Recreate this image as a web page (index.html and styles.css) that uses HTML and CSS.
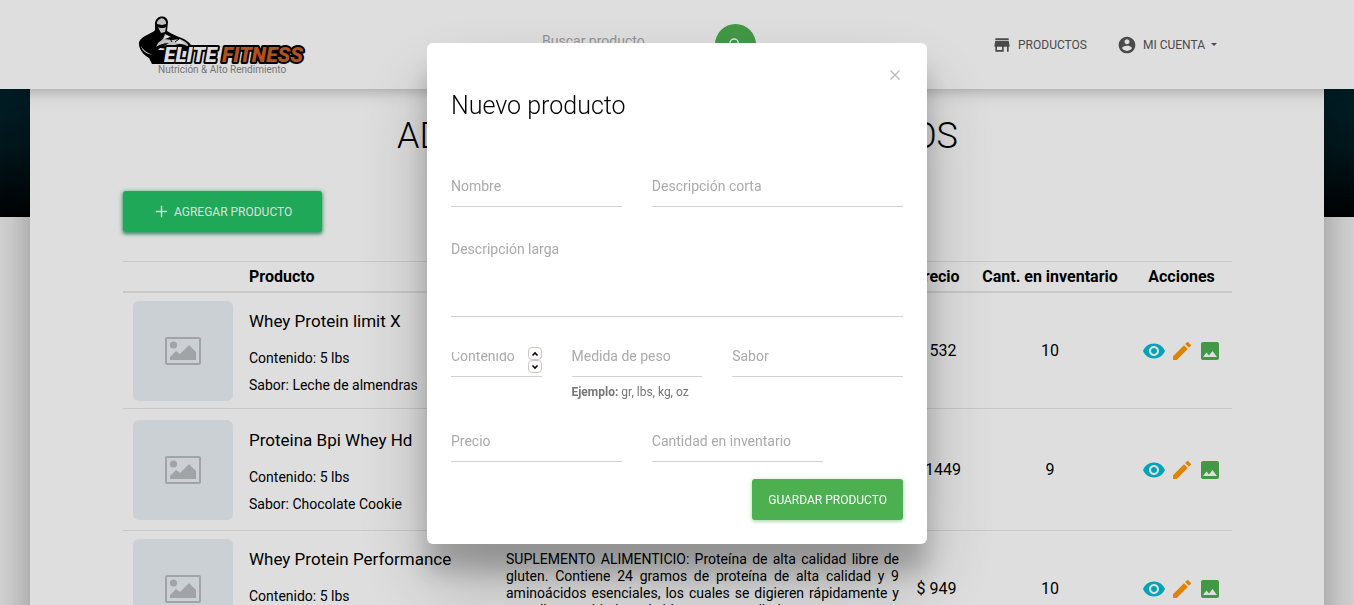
FILE: index.html
```
<!DOCTYPE html>
<html lang="es">
<head>
<meta charset="utf-8">
<title>Elite Fitness</title>
<meta name="viewport" content="width=device-width, initial-scale=1">
<link rel="stylesheet" href="styles.css">
</head>
<body>
<svg class="defs" width="0" height="0" aria-hidden="true">
  <symbol id="i-photo" viewBox="0 0 36 28"><path fill="none" stroke="currentColor" stroke-width="2" d="M2 1h32a1 1 0 0 1 1 1v24a1 1 0 0 1-1 1H2a1 1 0 0 1-1-1V2a1 1 0 0 1 1-1z"/><circle cx="8.500" cy="8" r="3.600" fill="currentColor"/><path fill="currentColor" d="M5 23v-3l6-6 4 3 9-9 7 7v8z"/></symbol>
  <symbol id="i-eye" viewBox="0 0 24 24"><path fill="currentColor" d="M12 4.500C7 4.500 2.730 7.610 1 12c1.730 4.390 6 7.500 11 7.500s9.270-3.110 11-7.500c-1.730-4.390-6-7.500-11-7.500zM12 17c-2.760 0-5-2.240-5-5s2.240-5 5-5 5 2.240 5 5-2.240 5-5 5zm0-8c-1.660 0-3 1.340-3 3s1.340 3 3 3 3-1.340 3-3-1.340-3-3-3z"/></symbol>
  <symbol id="i-edit" viewBox="0 0 24 24"><path fill="currentColor" d="M3 17.250V21h3.750L17.810 9.940l-3.750-3.750L3 17.250zM20.710 7.040a1 1 0 0 0 0-1.410l-2.340-2.340a1 1 0 0 0-1.410 0l-1.830 1.830 3.750 3.750 1.830-1.830z"/></symbol>
  <symbol id="i-image" viewBox="0 0 24 24"><path fill="currentColor" d="M21 19V5c0-1.100-.9-2-2-2H5c-1.100 0-2 .9-2 2v14c0 1.100.9 2 2 2h14c1.100 0 2-.9 2-2zM8.500 13.500l2.500 3.010L14.500 12l4.500 6H5l3.500-4.500z"/></symbol>
</svg>

<header class="navbar">
  <div class="container navbar-inner">
    <a class="brand" href="#" aria-label="Elite Fitness">
      <svg width="168" height="60" viewBox="0 0 168 60">
        <path fill="#000" d="M17 9c0-9 12-10 13-2l-1 9c5 3 8 4 12 6 6 2 11 5 13 10l-1 4H35L26 49H14l-3-6C5 40 0 33 1 27c3-7 13-8 16-12z"/>
        <path fill="#ddd" d="M19 7c3-5 7-5 9 0v2l-4 1-5-1zM20 12l2 1h4l2-1-1 5-4 1zM27 19l6 3-7 2 8 1 8-1c4 2 8 4 9 8-5-3-9-4-14-2-3 1-7 2-11 1l5-3c-5 0-8 1-13 4l2-4 5-4zM3 31c2 4 6 7 12 9l-4-1c-4-1-7-4-8-8z"/>
        <path fill="#fff" d="M28 20l4 2-6 2zM35 26l7-1 5 4-7-1zM22 33l9 1 8-1-6 2H20z"/>
        <path stroke="#000" stroke-width="1" fill="none" d="M31 22l3 5M41 24l-4 3"/>
        <g class="logo-word"><text x="26" y="47" fill="#fff">ELITE</text><text x="84" y="47" fill="#cc5f22">FITNESS</text></g>
        <text class="logo-tag" x="20" y="58">Nutrición &amp; Alto Rendimiento</text>
      </svg>
    </a>
    <form class="search">
      <input class="search-input" type="search" placeholder="Buscar producto" aria-label="Buscar producto">
      <button class="search-button" type="button" aria-label="Buscar"><svg width="18" height="18" viewBox="0 0 24 24"><path fill="#fff" d="M15.500 14h-.79l-.28-.27A6.470 6.470 0 0 0 16 9.500 6.500 6.500 0 1 0 9.500 16c1.610 0 3.090-.59 4.230-1.570l.27.28v.79l5 4.990L20.490 19l-4.990-5zm-6 0a4.500 4.500 0 1 1 0-9 4.500 4.500 0 0 1 0 9z"/></svg></button>
    </form>
    <nav class="nav">
      <a class="nav-link" href="#"><svg width="20" height="20" viewBox="0 0 24 24"><path fill="currentColor" d="M20 4H4v2h16V4zm1 10v-2l-1-5H4l-1 5v2h1v6h10v-6h4v6h2v-6h1zm-9 4H6v-4h6v4z"/></svg>PRODUCTOS</a>
      <a class="nav-link" href="#"><svg width="20" height="20" viewBox="0 0 24 24"><path fill="currentColor" d="M12 2C6.480 2 2 6.480 2 12s4.480 10 10 10 10-4.480 10-10S17.520 2 12 2zm0 3c1.660 0 3 1.340 3 3s-1.340 3-3 3-3-1.340-3-3 1.340-3 3-3zm0 14.200a7.200 7.200 0 0 1-6-3.220c.03-1.990 4-3.080 6-3.080 1.990 0 5.970 1.090 6 3.080a7.200 7.200 0 0 1-6 3.220z"/></svg>MI CUENTA<span class="caret"></span></a>
    </nav>
  </div>
</header>

<main class="main">
  <div class="container">
    <h1 class="page-title">ADMINISTRACIÓN DE PRODUCTOS</h1>
    <button class="btn btn-add" type="button"><svg width="17" height="17" viewBox="0 0 24 24"><path fill="currentColor" d="M20 13h-7v7h-2v-7H4v-2h7V4h2v7h7z"/></svg>AGREGAR PRODUCTO</button>
    <table class="products">
      <colgroup><col class="c-photo"><col class="c-name"><col class="c-desc"><col class="c-price"><col class="c-stock"><col class="c-actions"></colgroup>
      <thead>
        <tr><th></th><th class="left">Producto</th><th></th><th class="price">Precio</th><th>Cant. en inventario</th><th>Acciones</th></tr>
      </thead>
      <tbody>
        <tr>
          <td><div class="photo"><svg width="36" height="28"><use href="#i-photo"/></svg></div></td>
          <td class="left"><h2 class="name">Whey Protein limit X</h2><p class="detail">Contenido: 5 lbs</p><p class="detail">Sabor: Leche de almendras</p></td>
          <td></td><td class="price">$ 532</td><td>10</td>
          <td><div class="actions"><a class="view" href="#" aria-label="Ver"><svg width="24" height="24"><use href="#i-eye"/></svg></a><a class="edit" href="#" aria-label="Editar"><svg width="24" height="24"><use href="#i-edit"/></svg></a><a class="image" href="#" aria-label="Imagen"><svg width="24" height="24"><use href="#i-image"/></svg></a></div></td>
        </tr>
        <tr class="tall">
          <td><div class="photo"><svg width="36" height="28"><use href="#i-photo"/></svg></div></td>
          <td class="left"><h2 class="name">Proteina Bpi Whey Hd</h2><p class="detail">Contenido: 5 lbs</p><p class="detail">Sabor: Chocolate Cookie</p></td>
          <td></td><td class="price">$ 1449</td><td>9</td>
          <td><div class="actions"><a class="view" href="#" aria-label="Ver"><svg width="24" height="24"><use href="#i-eye"/></svg></a><a class="edit" href="#" aria-label="Editar"><svg width="24" height="24"><use href="#i-edit"/></svg></a><a class="image" href="#" aria-label="Imagen"><svg width="24" height="24"><use href="#i-image"/></svg></a></div></td>
        </tr>
        <tr>
          <td><div class="photo"><svg width="36" height="28"><use href="#i-photo"/></svg></div></td>
          <td class="left"><h2 class="name">Whey Protein Performance</h2><p class="detail">Contenido: 5 lbs</p><p class="detail">Sabor: Chocolate</p></td>
          <td class="desc"><p>SUPLEMENTO ALIMENTICIO: Proteína de alta calidad libre de gluten. Contiene 24 gramos de proteína de alta calidad y 9 aminoácidos esenciales, los cuales se digieren rápidamente y con ello sus objetivos de bienestar y rendimiento.</p></td>
          <td class="price">$ 949</td><td>10</td>
          <td><div class="actions"><a class="view" href="#" aria-label="Ver"><svg width="24" height="24"><use href="#i-eye"/></svg></a><a class="edit" href="#" aria-label="Editar"><svg width="24" height="24"><use href="#i-edit"/></svg></a><a class="image" href="#" aria-label="Imagen"><svg width="24" height="24"><use href="#i-image"/></svg></a></div></td>
        </tr>
      </tbody>
    </table>
  </div>
</main>

<div class="backdrop">
  <div class="modal" role="dialog" aria-modal="true" aria-labelledby="modal-title">
    <button class="close" type="button" aria-label="Cerrar"><svg width="16" height="16" viewBox="0 0 16 16"><path d="M3.500 3.500l9 9M12.500 3.500l-9 9" stroke="#bbb" stroke-width="1.300"/></svg></button>
    <h2 class="modal-title" id="modal-title">Nuevo producto</h2>
    <form class="form">
      <div class="field span-5"><label for="nombre">Nombre</label><input id="nombre" type="text"></div>
      <div class="field span-7"><label for="corta">Descripción corta</label><input id="corta" type="text"></div>
      <div class="field long span-12"><label for="larga">Descripción larga</label><textarea id="larga"></textarea></div>
      <div class="field number span-3"><label for="contenido">Contenido</label><input id="contenido" type="number">
        <div class="stepper"><button type="button" aria-label="Aumentar"><svg width="8" height="6" viewBox="0 0 8 6"><path d="M1.500 4.500L4 2l2.500 2.500"/></svg></button><button type="button" aria-label="Disminuir"><svg width="8" height="6" viewBox="0 0 8 6"><path d="M1.500 1.500L4 4l2.500-2.500"/></svg></button></div>
      </div>
      <div class="span-4"><div class="field"><label for="medida">Medida de peso</label><input id="medida" type="text"></div><p class="hint"><b>Ejemplo:</b> gr, lbs, kg, oz</p></div>
      <div class="field span-5"><label for="sabor">Sabor</label><input id="sabor" type="text"></div>
      <div class="field span-5"><label for="precio">Precio</label><input id="precio" type="text"></div>
      <div class="field span-5"><label for="cantidad">Cantidad en inventario</label><input id="cantidad" type="text"></div>
    </form>
    <div class="modal-footer"><button class="btn btn-save" type="button">GUARDAR PRODUCTO</button></div>
  </div>
</div>
</body>
</html>
```
FILE: styles.css
```
* { box-sizing: border-box; }
html { height: 100%; overflow: hidden; }
body {
  margin: 0;
  height: 100%;
  overflow: hidden;
  font: 400 16px/24px Roboto, "Liberation Sans", sans-serif;
  color: #000;
  background: #eee linear-gradient(#04242e 89px, #041a20 150px, #000304) no-repeat 0 0 / 100% 217px;
}
h1, h2, p { margin: 0; }
a { color: inherit; text-decoration: none; }
svg { display: block; flex: none; }
button { font: inherit; border: 0; padding: 0; cursor: pointer; }
.defs { position: absolute; }
.container { max-width: 1140px; margin: 0 auto; padding: 0 15px 0 16px; }

.navbar {
  position: relative;
  z-index: 2;
  background: #fff;
  box-shadow: 0 4px 18px 0 rgba(0, 0, 0, .12), 0 7px 10px -5px rgba(0, 0, 0, .15);
}
.navbar-inner { display: flex; align-items: center; justify-content: space-between; height: 89px; }
.brand { padding-left: 15px; }
.logo-word { font: italic 900 21px Roboto, sans-serif; stroke: #000; stroke-width: 4px; stroke-linejoin: round; paint-order: stroke; }
.logo-tag { font: 400 10px Roboto, sans-serif; fill: #888; }
.search { display: flex; align-items: center; gap: 16px; }
.search-input {
  width: 157px; height: 36px; padding: 0 0 6px; border: 0; border-bottom: 1px solid #d2d2d2;
  background: none; font: 400 14px/20px Roboto, sans-serif; outline: 0;
}
.search-input::placeholder { color: #aaa; opacity: 1; }
.search-button { display: grid; place-items: center; width: 41px; height: 41px; border-radius: 50%; background: #4caf50; }
.nav { display: flex; gap: 30px; padding-right: 15px; color: #555; font-size: 12px; }
.nav-link { display: flex; align-items: center; gap: 6px; }
.caret { border: 3px solid transparent; border-top-color: currentColor; border-bottom: 0; }

.main {
  margin: 0 30px;
  min-height: 100%;
  padding-top: 20px;
  background: #fff;
  box-shadow: 0 16px 24px 2px rgba(0, 0, 0, .14), 0 6px 30px 5px rgba(0, 0, 0, .12);
}
.page-title { font-size: 36px; line-height: 54px; font-weight: 300; text-align: center; }
.btn { display: inline-flex; align-items: center; justify-content: center; height: 41px; border-radius: 3px; color: #fff; font-size: 12px; }
.btn-add {
  margin: 28px 0 29px; padding: 0 30px; gap: 4px; background: #23c164;
  box-shadow: 0 1px 4px 1px rgba(35, 193, 100, .6), 0 2px 3px 0 rgba(0, 0, 60, .4);
}
.btn-save { padding: 0 16px; background: #4caf50; box-shadow: 0 2px 2px 0 rgba(76, 175, 80, .14), 0 1px 5px 0 rgba(76, 175, 80, .4); }

.products { width: 100%; table-layout: fixed; border-collapse: collapse; text-align: center; }
.c-photo { width: 118px; }
.c-name { width: 257px; }
.c-price { width: 62px; }
.c-stock { width: 162px; }
.c-actions { width: 101px; }
.products th { padding: 3px 8px 2px; border-top: 1px solid #e6e6e6; border-bottom: 2px solid #e6e6e6; font-weight: 700; white-space: nowrap; }
.products td { height: 116px; padding: 8px 8px 7px; border-bottom: 1px solid #e6e6e6; vertical-align: middle; white-space: nowrap; }
.products .tall td { height: 122px; }
.products .left { text-align: left; }
.products .price { padding-left: 5px; }
.products .desc { font-size: 14px; line-height: 17px; text-align: justify; white-space: normal; }
.desc p { padding-bottom: 9px; }
.photo { display: grid; place-items: center; width: 100px; height: 100px; margin-left: 2px; border-radius: 6px; background: #e9eff3; color: #b9bdc0; }
.name { font-size: 17px; line-height: 26px; font-weight: 400; margin: 4px 0 11px; }
.detail { font-size: 14px; line-height: 27px; }
.actions { display: flex; justify-content: center; gap: 4px; }
.view { color: #00bcd4; }
.edit { color: #ff9800; }
.image { color: #4caf50; }

.backdrop {
  position: fixed;
  inset: 0;
  z-index: 5;
  display: flex;
  align-items: flex-start;
  justify-content: center;
  padding-top: 43px;
  background: rgba(0, 0, 0, .13);
}
.modal {
  display: flex;
  flex-direction: column;
  width: 500px;
  padding: 20px 24px 24px;
  border-radius: 6px;
  background: #fff;
  box-shadow: 0 27px 24px 0 rgba(0, 0, 0, .2), 0 40px 77px 0 rgba(0, 0, 0, .22);
}
.close { display: grid; place-items: center; align-self: flex-end; width: 16px; height: 24px; background: none; }
.modal-title { font-size: 25px; line-height: 38px; font-weight: 300; margin-bottom: 46px; }
.form { display: grid; grid-template-columns: repeat(12, 1fr); gap: 24px 30px; align-items: start; }
.span-3 { grid-column: span 3; }
.span-4 { grid-column: span 4; }
.span-5 { grid-column: span 5; }
.span-7 { grid-column: span 7; }
.span-12 { grid-column: span 12; }
.field { display: grid; min-width: 0; }
.field label, .field input, .field textarea { grid-area: 1 / 1; }
.field label { padding-top: 5px; font-size: 14px; line-height: 20px; color: #aaa; align-self: start; white-space: nowrap; }
.field input, .field textarea {
  width: 100%; min-width: 0; height: 36px; margin: 0; padding: 0; border: 0; border-bottom: 1px solid #d2d2d2;
  border-radius: 0; background: none; outline: 0; resize: none; font: 400 14px/20px Roboto, sans-serif;
}
.field textarea { height: 86px; }
.long label { padding-top: 8px; }
.number label { height: 10px; margin-top: 11px; padding: 0; line-height: 8px; overflow: hidden; }
.number input { appearance: textfield; }
.number input::-webkit-inner-spin-button { appearance: none; }
.stepper { grid-area: 1 / 1; justify-self: end; display: flex; flex-direction: column; padding-top: 6px; }
.stepper button { display: grid; place-items: center; width: 14px; height: 13px; border: 1px solid #cdc7c2; border-radius: 4px; background: #fff; }
.stepper path { fill: none; stroke: #000; stroke-width: 1.600; }
.hint { margin-top: 5px; font-size: 12px; line-height: 20px; color: #777; }
.modal-footer { display: flex; justify-content: flex-end; margin-top: 17px; }
```
